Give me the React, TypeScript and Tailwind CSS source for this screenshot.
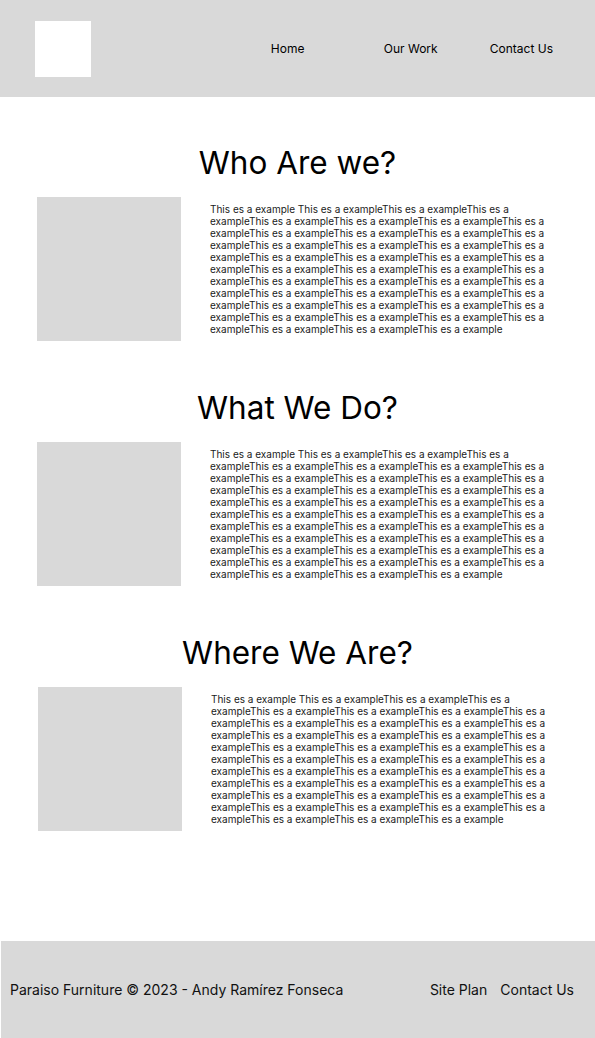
import React from "react";

const body = "This es a example " + "This es a example".repeat(42);

function Section({ title, shift = false }: { title: string; shift?: boolean }) {
  return (
    <section className="flex flex-col">
      <h2 className="pt-[3px] text-center text-[31.5px] leading-[39px] text-black font-normal">{title}</h2>
      <div className={`mt-[15px] flex items-start ${shift ? "pl-[38px]" : "pl-[37px]"}`}>
        <div className="w-[144px] h-[144px] bg-[#d9d9d9] shrink-0" />
        <p className="ml-[29px] mt-[6px] w-[340px] text-[10px] leading-[12px] text-[#1a1a1a]">{body}</p>
      </div>
    </section>
  );
}

export default function App() {
  return (
    <div className="w-[595px] min-h-[1038px] flex flex-col bg-white" style={{ fontFamily: "Inter, 'Noto Sans', sans-serif" }}>
      <header className="h-[97px] bg-[#d9d9d9] flex items-center pl-[35px]">
        <div className="w-[56px] h-[56px] bg-white" />
        <nav className="flex items-center text-[12px] text-black ml-auto mr-[42px] mt-px">
          <span className="w-[113px]">Home</span>
          <span className="w-[106px]">Our Work</span>
          <span>Contact Us</span>
        </nav>
      </header>
      <main className="flex flex-col gap-[44px] pt-[43px] pb-[110px]">
        <Section title="Who Are we?" />
        <Section title="What We Do?" />
        <Section title="Where We Are?" shift />
      </main>
      <footer className="mt-auto ml-px h-[97px] bg-[#d9d9d9] flex items-center pl-[9px] pr-[21px] text-[14px] text-[#111]">
        <span>Paraiso Furniture © 2023 - Andy Ramírez Fonseca</span>
        <span className="ml-auto">Site Plan</span>
        <span className="ml-[13px]">Contact Us</span>
      </footer>
    </div>
  );
}
